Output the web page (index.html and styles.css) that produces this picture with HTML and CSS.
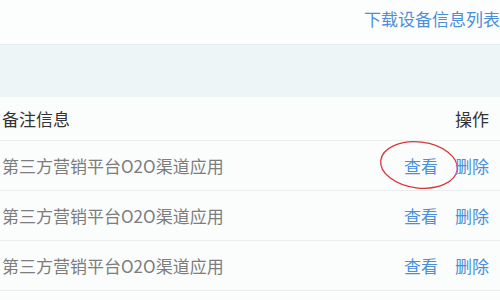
FILE: index.html
```html
<!DOCTYPE html>
<html lang="zh">
<head>
<meta charset="utf-8">
<link rel="stylesheet" href="styles.css">
</head>
<body>
<div class="page">
  <div class="topbar">
    <a class="download">下载设备信息列表</a>
  </div>
  <div class="band"></div>
  <div class="table">
    <div class="row head">
      <div class="note">备注信息</div>
      <div class="ops"><span class="op-title">操作</span></div>
    </div>
    <div class="row">
      <div class="note muted">第三方营销平台O2O渠道应用</div>
      <div class="ops">
        <span class="link view-wrap">查看
          <svg class="circle" width="84" height="56" viewBox="0 0 84 56"><ellipse cx="42" cy="28" rx="38.5" ry="23" transform="rotate(7 42 28)" fill="none" stroke="#d8363c" stroke-width="1.3"/></svg>
        </span>
        <span class="link">删除</span>
      </div>
    </div>
    <div class="row">
      <div class="note muted">第三方营销平台O2O渠道应用</div>
      <div class="ops"><span class="link">查看</span><span class="link">删除</span></div>
    </div>
    <div class="row">
      <div class="note muted">第三方营销平台O2O渠道应用</div>
      <div class="ops"><span class="link">查看</span><span class="link">删除</span></div>
    </div>
  </div>
</div>
</body>
</html>
```

FILE: styles.css
```css
html, body {
  margin: 0;
  padding: 0;
  background: #fbfcfc;
}
.page {
  width: 500px;
  height: 300px;
  overflow: hidden;
  font-family: "Noto Sans CJK SC", "Noto Sans", sans-serif;
  font-size: 17px;
  line-height: 24px;
}
.topbar {
  height: 44px;
  display: flex;
  justify-content: flex-end;
  align-items: flex-start;
  border-bottom: 1px solid #e3ecee;
  background: #fcfdfd;
}
.download {
  color: #4a8fd8;
  font-size: 17px;
  line-height: 24px;
  margin-top: 7px;
  margin-right: 0;
  white-space: nowrap;
}
.band {
  height: 52px;
  background: #eef5f6;
}
.table {
  display: flex;
  flex-direction: column;
}
.row {
  height: 49px;
  display: flex;
  align-items: center;
  justify-content: space-between;
  border-bottom: 1px solid #e8eef0;
  padding: 0 11px 0 2px;
}
.row.head {
  height: 43px;
  color: #333;
}
.note {
  white-space: nowrap;
  color: #333;
}
.note.muted {
  color: #7d7d7d;
}
.ops {
  display: flex;
  gap: 17px;
  align-items: center;
}
.op-title {
  color: #333;
}
.link {
  color: #4a8fd8;
  position: relative;
}
.circle {
  position: absolute;
  left: -27px;
  top: -17px;
}
```
